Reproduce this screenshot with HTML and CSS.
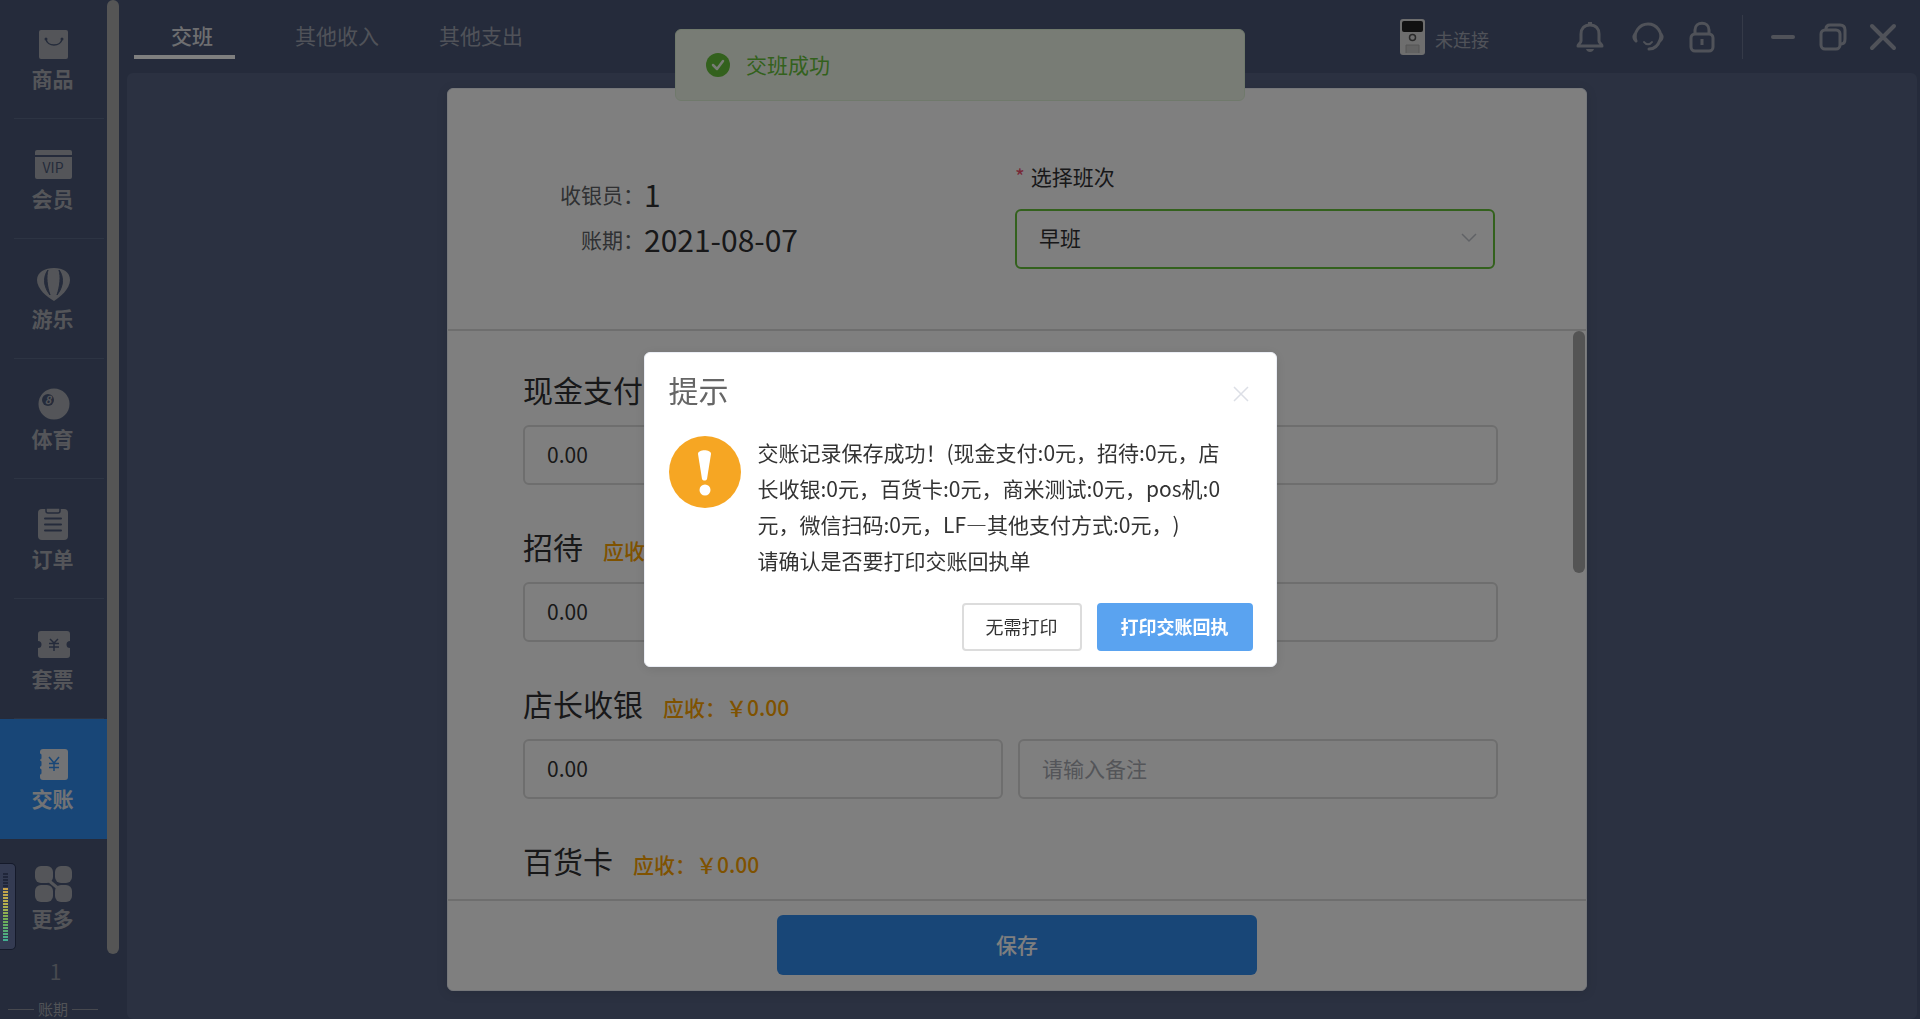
FILE: index.html
```html
<!DOCTYPE html>
<html lang="zh-CN">
<head>
<meta charset="utf-8">
<meta name="viewport" content="width=device-width, initial-scale=1">
<title>交班</title>
<link rel="stylesheet" href="styles.css">
</head>
<body>
<div class="app">
  <aside class="sidebar">
    <nav class="menu">
      <a class="menu-item" href="#goods">
        <svg class="menu-icon" viewBox="0 0 40 36"><rect x="6" y="4" width="29" height="29" rx="2" fill="currentColor"/><path d="M13 13c1 8 15 8 16 0" fill="none" stroke="#4a5776" stroke-width="1.5"/><circle cx="13" cy="13" r="1.5" fill="#4a5776"/><circle cx="29" cy="13" r="1.5" fill="#4a5776"/></svg>
        <span>商品</span>
      </a>
      <a class="menu-item" href="#member">
        <svg class="menu-icon" viewBox="0 0 40 36"><path d="M2 9V6a2 2 0 0 1 2-2h33a2 2 0 0 1 2 2v3zM2 11h37v20a2 2 0 0 1-2 2H4a2 2 0 0 1-2-2z" fill="currentColor"/><text class="icon-text" x="20" y="27" text-anchor="middle" font-size="14">VIP</text></svg>
        <span>会员</span>
      </a>
      <a class="menu-item" href="#play">
        <svg class="menu-icon" viewBox="0 0 40 36"><path d="M21 2c9 0 16 4 16 12 0 9-10 17-16 21C14 31 4 23 4 14 4 6 12 2 21 2z" fill="currentColor"/><path d="M15 4c-4 5-6 15 2 25-3-9-4-18-2-25zM26 4c4 5 6 15-2 25 3-9 4-18 2-25z" fill="#4a5776" stroke="#4a5776"/></svg>
        <span>游乐</span>
      </a>
      <a class="menu-item" href="#sport">
        <svg class="menu-icon" viewBox="0 0 40 36"><circle cx="21" cy="18" r="15.500" fill="currentColor"/><circle cx="15" cy="14" r="6" fill="#4a5776"/><text x="15" y="18" text-anchor="middle" font-size="11" font-style="italic" font-weight="700" fill="currentColor">8</text></svg>
        <span>体育</span>
      </a>
      <a class="menu-item" href="#order">
        <svg class="menu-icon" viewBox="0 0 40 36"><rect x="5" y="3" width="30" height="31" rx="4" fill="currentColor"/><path d="M13 2h14v3a2 2 0 0 1-2 2H15a2 2 0 0 1-2-2z" fill="currentColor" stroke="#4a5776" stroke-width="1.500"/><path d="M12 12.500h16M12 18.500h16M12 24.500h16" stroke="#4a5776" stroke-width="2" stroke-linecap="round"/></svg>
        <span>订单</span>
      </a>
      <a class="menu-item" href="#ticket">
        <svg class="menu-icon" viewBox="0 0 40 36"><path d="M8 5h26a3 3 0 0 1 3 3v7a3 3 0 0 0 0 7v7a3 3 0 0 1-3 3H8a3 3 0 0 1-3-3v-7a3 3 0 0 0 0-7V8a3 3 0 0 1 3-3z" fill="currentColor"/><path d="M17 13l4 4 4-4M16 17.500h10M16 21h10M21 17v8" fill="none" stroke="#4a5776" stroke-width="1.500"/></svg>
        <span>套票</span>
      </a>
      <a class="menu-item active" href="#settle" aria-current="page">
        <svg class="menu-icon" viewBox="0 0 40 36"><rect x="7" y="3" width="28" height="31" rx="3" fill="currentColor"/><path d="M7 9v3M7 16v3M7 24v3" stroke="#318cee" stroke-width="3" stroke-linecap="round"/><path d="M16 11l5 6 5-6M16 17.500h10M16 21.500h10M21 17v8" fill="none" stroke="#318cee" stroke-width="1.500"/></svg>
        <span>交账</span>
      </a>
      <a class="menu-item" href="#more">
        <svg class="menu-icon" viewBox="0 0 40 36"><g fill="currentColor"><rect x="2" y="0" width="18" height="17" rx="6"/><rect x="22" y="0" width="17" height="17" rx="6"/><rect x="2" y="19" width="18" height="17" rx="6"/><rect x="22" y="19" width="17" height="17" rx="6"/></g><path d="M15 14l11 9" stroke="currentColor" stroke-width="3"/></svg>
        <span>更多</span>
      </a>
    </nav>
    <div class="shift-no">1</div>
    <div class="period">账期</div>
  </aside>
  <div class="side-scroll"><div class="side-thumb"></div></div>

  <div class="page">
    <header class="topbar">
      <nav class="tabs">
        <a class="tab current" href="#shift">交班</a>
        <a class="tab" href="#income">其他收入</a>
        <a class="tab" href="#expense">其他支出</a>
      </nav>
      <div class="device">
        <svg width="25" height="36" viewBox="0 0 25 36"><rect x="0" y="0" width="25" height="36" rx="3" fill="#ddd"/><rect x="2" y="2" width="21" height="11" rx="2" fill="#222"/><circle cx="12.500" cy="18.500" r="3" fill="none" stroke="#555" stroke-width="1.500"/><path d="M6 34v-8h13v8" fill="#c4c4c4" stroke="#aaa"/></svg>
        <span>未连接</span>
      </div>
      <div class="tools">
        <button class="tool" type="button" aria-label="通知"><svg viewBox="0 0 32 32"><path d="M16 4c-6 0-9 4-9 9v7c0 2-3 3-3 5h24c0-2-3-3-3-5v-7c0-5-3-9-9-9z" fill="none" stroke="currentColor" stroke-width="3" stroke-linejoin="round"/><path d="M12 28h8c-1 4-7 4-8 0zM14 1h4v3h-4z" fill="currentColor"/></svg></button>
        <button class="tool" type="button" aria-label="客服"><svg viewBox="-2 0 32 32"><path d="M4 20c-3-8 3-17 12-17s15 9 12 16c-2 6-6 9-11 9M29 13c2 3 1 5-1 7M3 13c-2 3-1 5 1 7" fill="none" stroke="currentColor" stroke-width="3" stroke-linecap="round"/><path d="M12 21c2 3 6 3 8 0" fill="none" stroke="currentColor" stroke-width="2" stroke-linecap="round"/></svg></button>
        <button class="tool" type="button" aria-label="锁定"><svg viewBox="0 0 32 32"><rect x="5" y="13" width="22" height="17" rx="4" fill="none" stroke="currentColor" stroke-width="3"/><path d="M9 13V9c0-9 14-9 14 0v4M16 18v6" fill="none" stroke="currentColor" stroke-width="3"/></svg></button>
      </div>
      <div class="window-tools">
        <button class="tool" type="button" aria-label="最小化"><svg viewBox="0 0 32 32"><path d="M6 16h20" stroke="currentColor" stroke-width="4" stroke-linecap="round"/></svg></button>
        <button class="tool" type="button" aria-label="还原"><svg viewBox="0 0 32 32"><rect x="4" y="9" width="19" height="19" rx="4" fill="none" stroke="currentColor" stroke-width="3"/><path d="M9 8c0-3 2-4 4-4h10c4 0 5 2 5 5v9c0 4-2 5-4 5" fill="none" stroke="currentColor" stroke-width="3"/></svg></button>
        <button class="tool" type="button" aria-label="关闭"><svg viewBox="0 0 32 32"><path d="M5 5l22 22M27 5L5 27" stroke="currentColor" stroke-width="4" stroke-linecap="round"/></svg></button>
      </div>
    </header>

    <main class="content">
      <form class="card">
        <section class="card-head">
          <dl class="info">
            <dt>收银员：</dt><dd>1</dd>
            <dt>账期：</dt><dd>2021-08-07</dd>
          </dl>
          <div class="shift">
            <label class="shift-label" for="shift">选择班次</label>
            <div class="select-wrap">
              <select class="shift-select" id="shift"><option>早班</option></select>
              <svg class="chevron" viewBox="0 0 16 10"><path d="M1 1l7 7 7-7" fill="none" stroke="currentColor" stroke-width="1.500"/></svg>
            </div>
          </div>
        </section>
        <section class="card-body">
          <div class="payments">
            <div class="payment">
              <div class="pay-title"><label for="p1">现金支付</label></div>
              <div class="pay-row"><input class="field" id="p1" type="text" value="0.00"><input class="field" type="text" aria-label="现金支付备注"></div>
            </div>
            <div class="payment">
              <div class="pay-title"><label for="p2">招待</label><span class="due">应收：￥0.00</span></div>
              <div class="pay-row"><input class="field" id="p2" type="text" value="0.00"><input class="field" type="text" aria-label="招待备注"></div>
            </div>
            <div class="payment">
              <div class="pay-title"><label for="p3">店长收银</label><span class="due">应收：￥0.00</span></div>
              <div class="pay-row"><input class="field" id="p3" type="text" value="0.00"><input class="field" type="text" placeholder="请输入备注" aria-label="店长收银备注"></div>
            </div>
            <div class="payment">
              <div class="pay-title"><span>百货卡</span><span class="due">应收：￥0.00</span></div>
            </div>
          </div>
          <div class="body-scroll"></div>
        </section>
        <footer class="card-foot"><button class="save" type="button">保存</button></footer>
      </form>
    </main>
  </div>
</div>

<div class="toast" role="status">
  <svg width="24" height="24" viewBox="0 0 24 24"><circle cx="12" cy="12" r="12" fill="#67c23a"/><path d="M7 12l4 4 6-8" fill="none" stroke="#f0f9eb" stroke-width="2.500" stroke-linecap="round" stroke-linejoin="round"/></svg>
  <span>交班成功</span>
</div>

<div class="mask">
  <div class="dialog" role="dialog" aria-modal="true" aria-labelledby="dialog-title">
    <div class="dialog-head">
      <h2 class="dialog-title" id="dialog-title">提示</h2>
      <button class="dialog-close" type="button" aria-label="关闭提示"><svg width="16" height="16" viewBox="0 0 16 16"><path d="M1 1l14 14M15 1L1 15" stroke="currentColor" stroke-width="1.500"/></svg></button>
    </div>
    <div class="dialog-body">
      <svg class="warn" width="72" height="72" viewBox="0 0 72 72"><circle cx="36" cy="36" r="36" fill="#f6a623"/><path d="M29 18c0-5 13-5 13 0l-4 25c-1 2-4 2-5 0z" fill="#fff"/><circle cx="36" cy="54" r="5.500" fill="#fff"/></svg>
      <p class="message">交账记录保存成功！(现金支付:0元，招待:0元，店长收银:0元，百货卡:0元，商米测试:0元，pos机:0元，微信扫码:0元，LF—其他支付方式:0元，)<br>请确认是否要打印交账回执单</p>
    </div>
    <div class="dialog-foot">
      <button class="btn" type="button">无需打印</button>
      <button class="btn primary" type="button">打印交账回执</button>
    </div>
  </div>
</div>

<div class="meter"><div class="meter-idle"></div><div class="meter-level"></div></div>
</body>
</html>
```
FILE: styles.css
```css
* { box-sizing: border-box; }
body {
  margin: 0;
  font-family: "Noto Sans CJK SC", sans-serif;
  font-size: 21px;
  color: #333;
  background: #4a5776;
  text-spacing-trim: space-all;
}
a { color: inherit; text-decoration: none; }
button, input, select { font: inherit; color: inherit; }
button { border: 0; padding: 0; background: none; }

.app { display: flex; height: 100vh; overflow: hidden; }

/* sidebar */
.sidebar { width: 107px; flex: none; margin-top: -1px; color: #a9abb2; }
.menu-item {
  display: flex;
  flex-direction: column;
  align-items: center;
  height: 120px;
  padding: 27px 2px 0 0;
  font-weight: 700;
  line-height: 32px;
  background: linear-gradient(#5a6886, #5a6886) 14px 100% / 90px 1px no-repeat;
}
.menu-item:nth-child(n+7) { background: none; }
.menu-icon { width: 40px; height: 36px; }
.menu-item .icon-text { fill: #4a5776; font-weight: 400; }
.menu-item.active { background: #318cee; color: #e4e6ea; }
.shift-no { padding-left: 4px; text-align: center; line-height: 24px; color: #8e929e; }
.period {
  display: flex;
  align-items: center;
  gap: 4px;
  padding: 0 9px 0 8px;
  margin-top: 14px;
  font-size: 15px;
  line-height: 24px;
  color: #a3a6af;
}
.period::before, .period::after { content: ""; flex: 1; height: 1px; background: #8e929e; }
.side-scroll { width: 20px; flex: none; }
.side-thumb { width: 12px; height: 954px; border-radius: 6px; background: #ababab; }

/* top bar */
.page { flex: 1; min-width: 0; display: flex; flex-direction: column; }
.topbar { flex: none; display: flex; align-items: flex-start; height: 73px; padding: 0 21px 0 7px; color: #a0a5b2; }
.tabs { display: flex; gap: 60px; flex: 1; }
.tab { padding-top: 15px; height: 59px; line-height: 40px; }
.tab.current { padding-left: 37px; padding-right: 22px; border-bottom: 4px solid #fff; color: #dcdde0; font-weight: 500; }
.device { display: flex; align-items: center; gap: 10px; margin: 19px 85px 0 0; font-size: 18px; }
.device span { padding-top: 4px; line-height: 30px; }
.tools, .window-tools { display: flex; margin-top: 15px; height: 44px; align-items: center; }
.tools { gap: 24px; padding-right: 24px; border-right: 1px solid #6b7590; }
.window-tools { gap: 18px; padding-left: 24px; }
.tool { display: block; width: 32px; height: 32px; }
.tool svg { display: block; width: 32px; height: 32px; overflow: visible; }

/* content */
.content { flex: 1; min-height: 0; display: flex; justify-content: center; margin-right: 3px; padding: 15px 0 28px; background: #566282; border-radius: 6px; }
.card {
  display: flex;
  flex-direction: column;
  width: 1140px;
  margin-right: 10px;
  background: #fff;
  border: 1px solid #ebeef5;
  border-radius: 6px;
  box-shadow: 0 2px 12px rgba(0, 0, 0, .1);
}
.card-head { display: flex; justify-content: space-between; height: 242px; flex: none; padding: 69px 91px 0 112px; border-bottom: 2px solid #dcdcdc; }
.info { display: grid; grid-template-columns: 84px auto; grid-auto-rows: 45px; margin: 14px 0 0; line-height: 45px; }
.info dt { text-align: right; color: #606266; }
.info dd { margin: 0; font-size: 30px; color: #303133; }
.shift { width: 480px; }
.shift-label { display: block; line-height: 36px; margin-bottom: 15px; color: #303133; }
.shift-label::before { content: "*"; margin-right: 6px; color: #f0506e; }
.select-wrap { position: relative; }
.shift-select { appearance: none; display: block; width: 100%; height: 60px; padding: 0 22px 4px; border: 2px solid #67c23a; border-radius: 6px; background: #fff; color: #303133; }
.chevron { position: absolute; right: 18px; top: 24px; width: 16px; height: 10px; color: #c0c4cc; }
.card-body { flex: 1; min-height: 0; display: flex; overflow: hidden; }
.payments { flex: 1; min-width: 0; padding: 36px 75px 0 75px; }
.payment { margin-bottom: 41px; }
.pay-title { display: flex; align-items: baseline; gap: 20px; height: 44px; font-size: 30px; line-height: 44px; color: #303133; }
.due { font-size: 21px; font-weight: 500; color: #ffa500; }
.pay-row { display: grid; grid-template-columns: 1fr 1fr; gap: 15px; padding-top: 14px; }
.payment { height: 116px; }
.field { width: 100%; height: 60px; margin: 0; padding: 0 22px 3px; border: 2px solid #dcdcdc; border-radius: 6px; background: #fff; }
.field::placeholder { color: #a8abb2; opacity: 1; }
.body-scroll { width: 12px; height: 242px; margin-right: 1px; border-radius: 6px; background: #a8a8a8; }
.card-foot { flex: none; height: 91px; padding-top: 14px; border-top: 2px solid #dcdcdc; text-align: center; }
.save { width: 480px; height: 60px; padding-bottom: 3px; border-radius: 6px; background: #318cee; color: #fff; font-weight: 500; }

/* message shown at the top */
.toast {
  position: fixed;
  top: 29px;
  left: 50%;
  transform: translateX(-50%);
  display: flex;
  align-items: center;
  gap: 16px;
  width: 570px;
  height: 72px;
  padding: 0 30px;
  border: 1px solid #e1f3d8;
  border-radius: 6px;
  background: #f0f9eb;
  color: #67c23a;
}
.toast span { padding-bottom: 2px; }

/* dialog */
.mask { position: fixed; inset: 0; display: flex; align-items: center; justify-content: center; background: rgba(0, 0, 0, .5); }
.dialog { width: 633px; padding: 17px 23px 15px 24px; border: 1px solid #ebeef5; border-radius: 6px; background: #fff; box-shadow: 0 2px 12px rgba(0, 0, 0, .1); }
.dialog-head { display: flex; justify-content: space-between; align-items: center; height: 44px; }
.dialog-title { margin: 0; padding-bottom: 6px; font-size: 30px; font-weight: 400; line-height: 38px; color: #666; }
.dialog-close { height: 16px; margin: 4px 4px 0 0; color: #dcdfe6; line-height: 0; }
.dialog-body { display: flex; gap: 17px; padding: 20px 18px 0 0; }
.warn { flex: none; margin-top: 2px; }
.message { margin: 0; line-height: 36px; color: #333; }
.dialog-foot { display: flex; justify-content: flex-end; gap: 15px; padding-top: 25px; }
.btn { height: 48px; padding: 0 22px 2px; border: 2px solid #dcdcdc; border-radius: 4px; background: #fff; font-size: 18px; }
.btn.primary { border-color: #5aa3f0; background: #5aa3f0; color: #fff; font-weight: 700; }

/* floating volume meter */
.meter { position: fixed; left: 0; top: 863px; width: 16px; height: 87px; padding: 9px 7px 8px 3px; border: 1px solid #151a2a; border-left: 0; border-radius: 0 5px 5px 0; background: #343b52; }
.meter-idle { height: 15px; background: repeating-linear-gradient(#20263a 0 2px, #343b52 2px 3px); }
.meter-level { height: 54px; background: repeating-linear-gradient(transparent 0 2px, #343b52 2px 3px), linear-gradient(#c8a04a, #b8b04c 30%, #6fae55 60%, #3fae96); }
```
